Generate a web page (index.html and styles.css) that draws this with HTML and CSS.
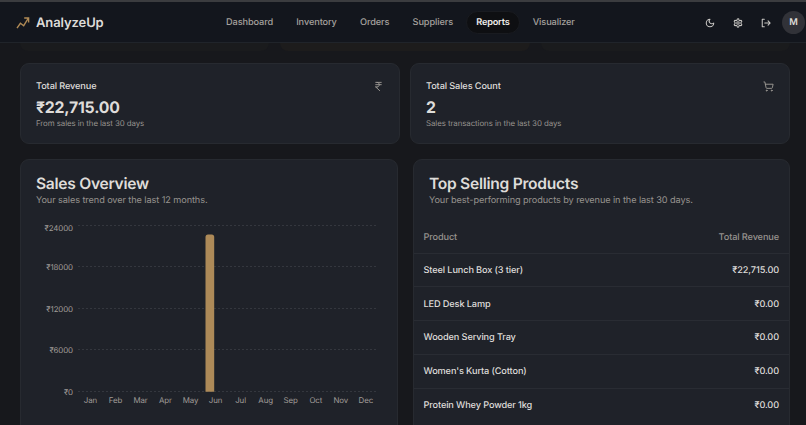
FILE: index.html
```html
<!DOCTYPE html>
<html lang="en">
<head>
<meta charset="utf-8">
<title>AnalyzeUp</title>
<link rel="stylesheet" href="styles.css">
</head>
<body>
<header class="topbar">
  <div class="brand">
    <svg class="logo" viewBox="0 0 14 14"><path d="M1 12.2 4.4 7.3 7.7 9.7 12.4 2M8.2 2h4.4v4.4"/></svg>
    <span>AnalyzeUp</span>
  </div>
  <nav class="nav">
    <a>Dashboard</a><a>Inventory</a><a>Orders</a><a>Suppliers</a><a class="active">Reports</a><a>Visualizer</a>
  </nav>
  <div class="actions">
    <svg class="icon" viewBox="0 0 24 24"><path d="M12 3a6 6 0 0 0 9 9 9 9 0 1 1-9-9Z"/></svg>
    <svg class="icon" viewBox="0 0 24 24"><path d="M12.22 2h-.44a2 2 0 0 0-2 2v.18a2 2 0 0 1-1 1.73l-.43.25a2 2 0 0 1-2 0l-.15-.08a2 2 0 0 0-2.73.73l-.22.38a2 2 0 0 0 .73 2.73l.15.1a2 2 0 0 1 1 1.72v.51a2 2 0 0 1-1 1.74l-.15.09a2 2 0 0 0-.73 2.73l.22.38a2 2 0 0 0 2.73.73l.15-.08a2 2 0 0 1 2 0l.43.25a2 2 0 0 1 1 1.73V20a2 2 0 0 0 2 2h.44a2 2 0 0 0 2-2v-.18a2 2 0 0 1 1-1.73l.43-.25a2 2 0 0 1 2 0l.15.08a2 2 0 0 0 2.73-.73l.22-.39a2 2 0 0 0-.73-2.73l-.15-.08a2 2 0 0 1-1-1.74v-.5a2 2 0 0 1 1-1.74l.15-.09a2 2 0 0 0 .73-2.73l-.22-.38a2 2 0 0 0-2.73-.73l-.15.08a2 2 0 0 1-2 0l-.43-.25a2 2 0 0 1-1-1.73V4a2 2 0 0 0-2-2z"/><circle cx="12" cy="12" r="3"/></svg>
    <svg class="icon" viewBox="0 0 24 24"><path d="M8 3H3v18h5M9 12h13M17 7l5 5-5 5"/></svg>
    <span class="avatar">M</span>
  </div>
</header>
<div class="previous"><i></i><i class="warm"></i><i></i></div>
<main>
  <section class="stats">
    <article class="card stat">
      <div class="stat-head"><h3>Total Revenue</h3><svg class="icon muted" viewBox="0 0 24 24"><path d="M6 3h12M6 8h12M6 13l8.5 8M6 13h3M9 13c6.67 0 6.67-10 0-10"/></svg></div>
      <div class="value">₹22,715.00</div>
      <p>From sales in the last 30 days</p>
    </article>
    <article class="card stat">
      <div class="stat-head"><h3>Total Sales Count</h3><svg class="icon muted" viewBox="0 0 24 24"><circle cx="8" cy="21" r="1"/><circle cx="19" cy="21" r="1"/><path d="M2.05 2.05h2l2.66 12.42a2 2 0 0 0 2 1.58h9.78a2 2 0 0 0 1.95-1.57l1.65-7.43H5.12"/></svg></div>
      <div class="value">2</div>
      <p>Sales transactions in the last 30 days</p>
    </article>
  </section>
  <section class="panels">
    <article class="card panel">
      <div class="panel-head"><h2>Sales Overview</h2><p>Your sales trend over the last 12 months.</p></div>
      <svg class="chart" viewBox="0 0 376 200">
        <g class="grid"><path d="M57 10.5H356M57 51.5H356M57 93.5H356M57 134.5H356M57 176.5H356"/></g>
        <path class="bar" d="M184.5 176.8V22a2.5 2.5 0 0 1 2.5-2.5h3.7a2.5 2.5 0 0 1 2.5 2.5v154.8z"/>
        <g class="ylabels"><text x="52" y="16">₹24000</text><text x="52" y="55">₹18000</text><text x="52" y="97">₹12000</text><text x="52" y="138">₹6000</text><text x="52" y="180">₹0</text></g>
        <g class="xlabels"><text x="69.5" y="187.5">Jan</text><text x="94.5" y="187.5">Feb</text><text x="119.5" y="187.5">Mar</text><text x="144.5" y="187.5">Apr</text><text x="169.5" y="187.5">May</text><text x="194.6" y="187.5">Jun</text><text x="219.6" y="187.5">Jul</text><text x="244.7" y="187.5">Aug</text><text x="269.7" y="187.5">Sep</text><text x="294.8" y="187.5">Oct</text><text x="319.8" y="187.5">Nov</text><text x="344.8" y="187.5">Dec</text></g>
      </svg>
    </article>
    <article class="card panel">
      <div class="panel-head"><h2>Top Selling Products</h2><p>Your best-performing products by revenue in the last 30 days.</p></div>
      <div class="table">
        <div class="row head"><span>Product</span><span>Total Revenue</span></div>
        <div class="row"><span>Steel Lunch Box (3 tier)</span><span>₹22,715.00</span></div>
        <div class="row"><span>LED Desk Lamp</span><span>₹0.00</span></div>
        <div class="row"><span>Wooden Serving Tray</span><span>₹0.00</span></div>
        <div class="row"><span>Women's Kurta (Cotton)</span><span>₹0.00</span></div>
        <div class="row"><span>Protein Whey Powder 1kg</span><span>₹0.00</span></div>
      </div>
    </article>
  </section>
</main>
</body>
</html>
```
FILE: styles.css
```css
* { box-sizing: border-box; margin: 0; }
body { height: 425px; overflow: hidden; background: #17181c; color: #dedcd9; font-family: Inter, sans-serif; text-rendering: geometricPrecision; }
.topbar { display: grid; grid-template-columns: 216px 1fr auto; align-items: center; height: 43px; padding: 1px 1px 0 0; background: #13161d; border-top: 2px solid #3b3c3f; border-bottom: 1px solid #20242a; }
.brand { display: flex; align-items: center; gap: 6px; padding-left: 16px; font-size: 13px; font-weight: 600; letter-spacing: -0.1px; }
.logo { width: 14px; height: 14px; fill: none; stroke: #b08a55; stroke-width: 1.4; }
.nav { display: flex; gap: 3.2px; font-size: 9.2px; font-weight: 500; letter-spacing: -0.1px; color: #a5a19d; }
.nav a { display: flex; align-items: center; height: 23px; padding: 0 9px; border: 1px solid transparent; border-radius: 12px; }
.nav .active { background: #0e0f12; border-color: #191b20; color: #efedeb; font-weight: 600; letter-spacing: -0.2px; }
.actions { display: flex; align-items: center; }
.actions .icon { margin-right: 18px; }
.actions .icon:nth-of-type(3) { margin-right: 11px; }
.icon { width: 10px; height: 10px; fill: none; stroke: #c9c7c4; stroke-width: 2.5; stroke-linecap: round; stroke-linejoin: round; }
.icon.muted { width: 11px; height: 11px; stroke: #a09c97; stroke-width: 2; }
.avatar { display: flex; align-items: center; justify-content: center; width: 23px; height: 23px; border-radius: 50%; background: #313238; font-size: 9.3px; font-weight: 600; }
.previous { display: grid; grid-template-columns: repeat(3, 1fr); gap: 11px; height: 20px; padding: 0 16px 0 20px; }
.previous i { height: 8px; border-radius: 0 0 8px 8px; background: #1a1b1d; }
.previous .warm { background: #1d1c1c; }
main { padding: 0 16px 0 20px; }
.card { background: #1f2229; border: 1px solid #272a30; border-radius: 9px; }
.stats { display: grid; grid-template-columns: 380px 380px; gap: 10px; }
.stat { height: 81px; padding: 16px 15px 0; }
.stat-head { display: flex; justify-content: space-between; align-items: center; height: 12px; }
.stat h3 { font-size: 9.2px; font-weight: 500; letter-spacing: -0.12px; }
.value { margin-top: 6px; font-size: 15.8px; font-weight: 700; line-height: 20px; letter-spacing: -0.2px; }
.stat p { font-size: 7.9px; line-height: 11px; letter-spacing: -0.08px; color: #96928e; }
.panels { display: grid; grid-template-columns: 378px 377px; gap: 15px; margin-top: 15px; }
.panel { height: 280px; }
.panel-head { height: 55px; padding: 14px 15px 0; }
.panel h2 { font-size: 15.6px; font-weight: 600; line-height: 19px; letter-spacing: -0.28px; }
.panel p { font-size: 9.2px; line-height: 16px; letter-spacing: -0.1px; color: #96928e; }
.chart { display: block; width: 376px; height: 200px; font-size: 7.9px; letter-spacing: -0.1px; fill: #a09c98; }
.grid { fill: none; stroke: #34373e; stroke-dasharray: 2 2; }
.bar { fill: #ad8a58; }
.ylabels { text-anchor: end; }
.xlabels { text-anchor: middle; }
.row { display: flex; align-items: center; justify-content: space-between; height: 33.75px; padding: 1px 10px 0 9.5px; border-bottom: 1px solid #292c33; font-size: 9.2px; font-weight: 500; letter-spacing: -0.12px; }
.head { height: 38.5px; padding-top: 8px; color: #96928e; }
.row:last-child { border-bottom: 0; }
```
